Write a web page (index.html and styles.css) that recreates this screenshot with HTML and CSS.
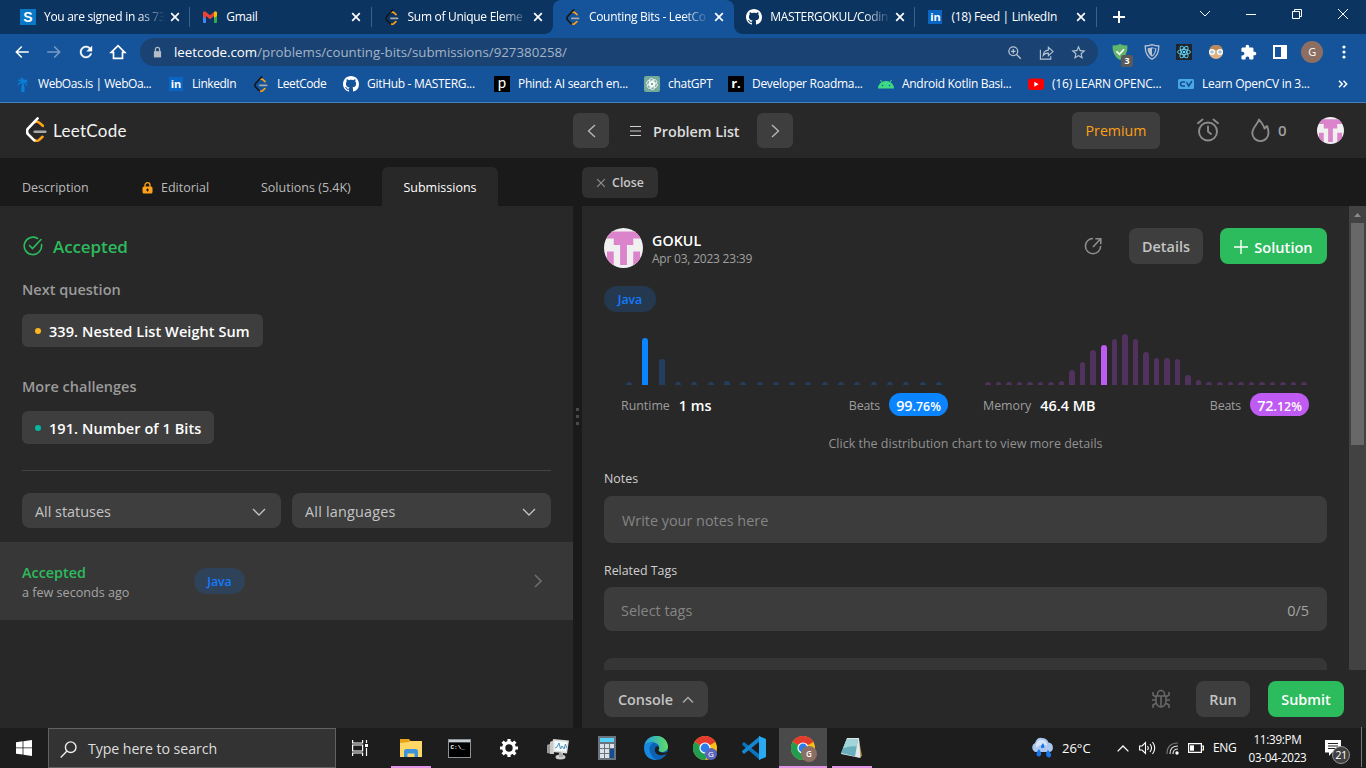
FILE: index.html
```html
<!DOCTYPE html>
<html lang="en">
<head>
<meta charset="utf-8">
<title>Counting Bits - LeetCode</title>
<link rel="stylesheet" href="styles.css">
</head>
<body>
<svg class="defs" aria-hidden="true">
  <symbol id="leet" viewBox="0 0 21 25"><g fill="none" stroke-width="2.6" stroke-linecap="round"><path d="M8.2 5.2l2.2-.6q1.400-.1 3 1.200l3.400 3M8.300 23.200q2.600 1.400 4.800-.2l3.400-3.200" stroke="#ffa116"/><path d="M8.700 14.700h10.600" stroke="#a9a9a9"/><path d="M11.600 1.400L2 11.600q-2 2.700 0 5.600l6.200 6.200" stroke="currentColor"/></g></symbol>
  <symbol id="github" viewBox="0 0 16 16"><path fill="#fff" d="M8 0C3.58 0 0 3.58 0 8c0 3.54 2.29 6.53 5.47 7.59.4.07.55-.17.55-.38 0-.19-.01-.82-.01-1.49-2.01.37-2.53-.49-2.69-.94-.09-.23-.48-.94-.82-1.13-.28-.15-.68-.52-.01-.53.63-.01 1.08.58 1.23.82.72 1.21 1.87.87 2.33.66.07-.52.28-.87.51-1.07-1.78-.2-3.64-.89-3.64-3.95 0-.87.31-1.59.82-2.15-.08-.2-.36-1.02.08-2.12 0 0 .67-.21 2.2.82.64-.18 1.32-.27 2-.27.68 0 1.36.09 2 .27 1.53-1.04 2.2-.82 2.2-.82.44 1.1.16 1.92.08 2.12.51.56.82 1.27.82 2.15 0 3.07-1.87 3.75-3.65 3.95.29.25.54.73.54 1.48 0 1.07-.01 1.93-.01 2.2 0 .21.15.46.55.38A8.013 8.013 0 0016 8c0-4.42-3.58-8-8-8z"/></symbol>
  <symbol id="close" viewBox="0 0 10 10"><path d="M1.2 1.2l7.6 7.6M8.8 1.2L1.2 8.8" stroke="currentColor" stroke-width="1.7" fill="none"/></symbol>
  <symbol id="close-thin" viewBox="0 0 10 10"><path d="M1.2 1.2l7.6 7.6M8.8 1.2L1.2 8.8" stroke="currentColor" stroke-width="1.2" fill="none"/></symbol>
  <symbol id="avatar" viewBox="0 0 40 40"><clipPath id="disc"><circle cx="20" cy="20" r="20"/></clipPath><g clip-path="url(#disc)"><path fill="#f0f0f0" d="M0 0h40v40H0z"/><path fill="#db83cb" d="M3 3.500h34v7h-7v6.500h-6.500V37h-7V17H10v-6.500H3zM3 23.500h7V37H3zM30 23.500h7V37h-7z"/></g></symbol>
  <symbol id="chrome" viewBox="0 0 24 24"><circle cx="12" cy="12" r="12" fill="#fbc116"/><path d="M12 12L1.600 6A12 12 0 0 1 22.400 6z" fill="#e33b2e"/><path d="M12 12L1.600 6A12 12 0 0 0 12 24L17.200 15z" fill="#219c50"/><circle cx="12" cy="12" r="5.600" fill="#fff"/><circle cx="12" cy="12" r="4.400" fill="#2b7de9"/></symbol>
  <symbol id="chevron-down" viewBox="0 0 14 8"><path d="M1 1l6 6 6-6" fill="none" stroke="currentColor" stroke-width="1.300"/></symbol>
</svg>

<header class="browser">
  <div class="tabstrip">
    <div class="tab first"><span class="fav sq-blue">S</span><span class="tab-title fade">You are signed in as 73</span><svg class="x"><use href="#close"/></svg></div>
    <div class="tab"><svg class="fav" viewBox="0 0 16 16"><path d="M1 3h3v11H2q-1 0-1-1z" fill="#4285f4"/><path d="M12 3h3v10q0 1-1 1h-2z" fill="#34a853"/><path d="M1 7V3.500Q2.500 1.500 4 3l4 3.200L12 3v4l-4 3.300L4 7v3z" fill="#ea4335"/><path d="M12 3q2-1.500 3 .5V7l-3 2z" fill="#fbbc04"/></svg><span class="tab-title">Gmail</span><svg class="x"><use href="#close"/></svg></div>
    <div class="tab"><svg class="fav leet-dark"><use href="#leet"/></svg><span class="tab-title fade">Sum of Unique Eleme</span><svg class="x"><use href="#close"/></svg></div>
    <div class="tab active"><svg class="fav leet-dark"><use href="#leet"/></svg><span class="tab-title fade">Counting Bits - LeetCo</span><svg class="x"><use href="#close"/></svg></div>
    <div class="tab"><svg class="fav"><use href="#github"/></svg><span class="tab-title fade">MASTERGOKUL/Codin</span><svg class="x"><use href="#close"/></svg></div>
    <div class="tab"><span class="fav linkedin">in</span><span class="tab-title">(18) Feed | LinkedIn</span><svg class="x"><use href="#close"/></svg></div>
    <svg class="newtab" viewBox="0 0 12 12"><path d="M6 0v12M0 6h12" stroke="#fff" stroke-width="2"/></svg>
    <div class="window-controls">
      <svg width="12" height="12" viewBox="0 0 12 12"><path d="M1 3l5 5 5-5" fill="none" stroke="#fff"/></svg>
      <svg width="12" height="12" viewBox="0 0 12 12"><path d="M1 6.500h10" stroke="#fff"/></svg>
      <svg width="12" height="12" viewBox="0 0 12 12"><path d="M1.500 3.500h7v7h-7zM3.500 3.500v-2h7v7h-2" fill="none" stroke="#fff"/></svg>
      <svg width="12" height="12" viewBox="0 0 12 12"><path d="M1 1l10 10M11 1L1 11" stroke="#fff"/></svg>
    </div>
  </div>

  <div class="toolbar">
    <svg class="nav" viewBox="0 0 24 24"><path fill="#fff" d="M21 11H6.800l5.600-5.600L11 4l-8 8 8 8 1.400-1.400L6.800 13H21z"/></svg>
    <svg class="nav dim" viewBox="0 0 24 24"><path fill="#fff" d="M3 11h14.200l-5.600-5.600L13 4l8 8-8 8-1.400-1.400 5.600-5.600H3z"/></svg>
    <svg class="nav" viewBox="0 0 24 24"><path fill="#fff" stroke="#fff" stroke-width=".5" d="M17.650 6.350C16.200 4.900 14.210 4 12 4c-4.420 0-7.990 3.580-7.990 8s3.570 8 7.990 8c3.730 0 6.840-2.550 7.730-6h-2.080c-.82 2.330-3.040 4-5.650 4-3.310 0-6-2.690-6-6s2.690-6 6-6c1.660 0 3.140.69 4.220 1.780L13 11h7V4l-2.350 2.350z"/></svg>
    <svg class="nav" viewBox="0 0 20 20"><path d="M2.500 10.500L10 3l7.500 7.500H15V17H5v-6.500z" fill="none" stroke="#fff" stroke-width="1.900"/></svg>
    <div class="omnibox">
      <svg class="lock" viewBox="0 0 10 12"><path d="M1 5h8v7H1z" fill="#b3bcc7"/><path d="M2.700 5V3.200a2.300 2.300 0 0 1 4.600 0V5" fill="none" stroke="#b3bcc7" stroke-width="1.400"/></svg>
      <span class="url"><b>leetcode.com</b>/problems/counting-bits/submissions/927380258/</span>
      <svg class="oi" viewBox="0 0 16 16"><g fill="none" stroke="#b6c3d2" stroke-width="1.400"><circle cx="6.700" cy="6.700" r="4.700"/><path d="M10.200 10.200l4.500 4.500M4.300 6.700h4.800M6.700 4.300v4.800"/></g></svg>
      <svg class="oi" viewBox="0 0 16 16"><g fill="none" stroke="#b6c3d2" stroke-width="1.200"><path d="M1.500 5v10h11v-3"/><path d="M4.500 11q.5-5 5.500-5.500V2.500L15 7l-5 4.500V8.700Q6.500 8.500 4.500 11z"/></g></svg>
      <svg class="oi star" viewBox="0 0 24 24"><path fill="#b6c3d2" d="M22 9.240l-7.190-.62L12 2 9.190 8.630 2 9.240l5.460 4.730L5.820 21 12 17.270 18.180 21l-1.630-7.030L22 9.240zM12 15.400l-3.760 2.270 1-4.280-3.320-2.880 4.380-.38L12 6.100l1.710 4.040 4.380.38-3.320 2.880 1 4.280L12 15.400z"/></svg>
    </div>
    <div class="ext"><svg width="16" height="16" viewBox="0 0 16 16"><path d="M8 0q3 1.500 7.500 1.500Q16 12 8 16 0 12 .5 1.500 5 1.500 8 0z" fill="#62b66b"/><path d="M4.500 7.300l3 3 4.500-5" fill="none" stroke="#fff" stroke-width="1.700"/></svg><span class="badge">3</span></div>
    <div class="ext"><svg width="16" height="16" viewBox="0 0 16 16"><path d="M8 .7q3 1.300 6.800 1.300Q15 11.500 8 15.300 1 11.500 1.200 2 5 2 8 .7z" fill="none" stroke="#b9c3d0" stroke-width="1.300"/><path d="M8 3.200q2 .8 4.400 1Q12.300 10 8 12.700 3.700 10 3.600 4.200 6 4 8 3.200z" fill="#b9c3d0"/><path d="M8 4.500h3.200Q11 9.500 8 11.500z" fill="#15539a"/></svg></div>
    <div class="ext"><svg width="16" height="16" viewBox="0 0 16 16"><path fill="#20232a" d="M0 0h16v16H0z"/><g fill="none" stroke="#61dafb" stroke-width=".9"><ellipse cx="8" cy="8" rx="6.500" ry="2.500"/><ellipse cx="8" cy="8" rx="6.500" ry="2.500" transform="rotate(60 8 8)"/><ellipse cx="8" cy="8" rx="6.500" ry="2.500" transform="rotate(120 8 8)"/></g><circle cx="8" cy="8" r="1.300" fill="#61dafb"/></svg></div>
    <div class="ext"><svg width="16" height="16" viewBox="0 0 16 16"><circle cx="8" cy="8" r="7" fill="#e0b283"/><path d="M1.500 6Q2 1 8 1t6.500 5z" fill="#b98a5c"/><circle cx="4" cy="8" r="2.400" fill="#a5c4d4" stroke="#fff" stroke-width="1.200"/><circle cx="12" cy="8" r="2.400" fill="#a5c4d4" stroke="#fff" stroke-width="1.200"/></svg></div>
    <div class="ext"><svg width="17" height="17" viewBox="0 0 24 24"><path fill="#fff" d="M20.500 11H19V7c0-1.100-.9-2-2-2h-4V3.500C13 2.120 11.880 1 10.500 1S8 2.120 8 3.500V5H4c-1.100 0-1.990.9-1.990 2v3.800H3.500c1.490 0 2.700 1.210 2.700 2.700s-1.210 2.700-2.700 2.700H2V20c0 1.100.9 2 2 2h3.800v-1.500c0-1.490 1.210-2.700 2.700-2.700 1.490 0 2.700 1.210 2.700 2.700V22H17c1.100 0 2-.9 2-2v-4h1.500c1.380 0 2.500-1.120 2.500-2.500S21.880 11 20.500 11z"/></svg></div>
    <div class="ext"><svg width="14" height="14" viewBox="0 0 14 14"><path fill="#fff" fill-rule="evenodd" d="M0 0h14v14H0zM2 2v10h6V2z"/></svg></div>
    <div class="ext"><span class="profile">G</span></div>
    <div class="ext"><svg width="4" height="14" viewBox="0 0 4 14"><g fill="#fff"><circle cx="2" cy="2" r="1.600"/><circle cx="2" cy="7" r="1.600"/><circle cx="2" cy="12" r="1.600"/></g></svg></div>
  </div>

  <nav class="bookmarks">
    <span class="bm tight"><svg class="fav" viewBox="0 0 16 16"><path d="M8 5Q5 1 3 6q2-2 4-.5Q4 6 3.500 10 6 7 8 6.500L7 16h3.500Q11 10 9 6.500q3 1 3 4Q14 8 11 6q2-.5 3 1Q13 2 9.500 4 10 1 6.500 2z" fill="#0a80d8"/></svg>WebOas.is | WebOa...</span>
    <span class="bm tight"><span class="fav linkedin">in</span>LinkedIn</span>
    <span class="bm tight"><svg class="fav leet-dark"><use href="#leet"/></svg>LeetCode</span>
    <span class="bm"><svg class="fav"><use href="#github"/></svg>GitHub - MASTERG...</span>
    <span class="bm"><span class="fav phind">p</span>Phind: AI search en...</span>
    <span class="bm"><svg class="fav" viewBox="0 0 16 16"><rect width="16" height="16" rx="2" fill="#74aa9c"/><g fill="none" stroke="#fff" stroke-width=".8"><rect x="5.300" y="2.500" width="4.500" height="7.500" rx="2.200"/><rect x="5.300" y="2.500" width="4.500" height="7.500" rx="2.200" transform="rotate(60 8 8)"/><rect x="5.300" y="2.500" width="4.500" height="7.500" rx="2.200" transform="rotate(120 8 8)"/><rect x="5.300" y="2.500" width="4.500" height="7.500" rx="2.200" transform="rotate(180 8 8)"/><rect x="5.300" y="2.500" width="4.500" height="7.500" rx="2.200" transform="rotate(240 8 8)"/><rect x="5.300" y="2.500" width="4.500" height="7.500" rx="2.200" transform="rotate(300 8 8)"/></g></svg>chatGPT</span>
    <span class="bm"><span class="fav roadmap">r.</span>Developer Roadma...</span>
    <span class="bm"><svg class="fav" viewBox="0 0 16 16"><path d="M0 12.500a8 7.500 0 0 1 16 0z" fill="#3ddc84"/><path d="M4 6.500L2.500 4M12 6.500L13.500 4" stroke="#3ddc84"/><circle cx="4.500" cy="9.500" r=".8" fill="#15539a"/><circle cx="11.500" cy="9.500" r=".8" fill="#15539a"/></svg>Android Kotlin Basi...</span>
    <span class="bm wide"><svg class="fav" viewBox="0 0 16 16"><rect y="2.500" width="16" height="11.500" rx="3" fill="red"/><path d="M6.300 5.800v5l4.300-2.500z" fill="#fff"/></svg>(16) LEARN OPENC...</span>
    <span class="bm"><svg class="fav" viewBox="0 0 16 16"><rect y="3" width="16" height="10" rx="1.500" fill="#4aa8e8"/><path d="M7 6H4.500Q2.500 6 2.500 8t2 2H7M8.500 6l2.200 4L14 5" fill="none" stroke="#114d91" stroke-width="1.500"/></svg>Learn OpenCV in 3...</span>
    <svg class="more" width="10" height="8" viewBox="0 0 10 8"><path d="M1 .8L4.200 4 1 7.200M5.500.8L8.700 4 5.500 7.200" fill="none" stroke="#fff" stroke-width="1.500"/></svg>
  </nav>
</header>

<div class="site-header">
  <div class="brand"><svg width="21" height="25"><use href="#leet"/></svg><span>LeetCode</span></div>
  <div class="problem-nav">
    <button class="square"><svg width="9" height="14" viewBox="0 0 9 14"><path d="M8 1L1.500 7 8 13" fill="none" stroke="currentColor" stroke-width="1.300"/></svg></button>
    <svg class="list" width="11" height="12" viewBox="0 0 11 12"><path d="M0 1.500h11M0 6h11M0 10.500h11" stroke="#d0d0d0" stroke-width="1.200"/></svg>
    <span class="list-title">Problem List</span>
    <button class="square"><svg width="9" height="14" viewBox="0 0 9 14"><path d="M1 1l6.500 6L1 13" fill="none" stroke="currentColor" stroke-width="1.300"/></svg></button>
  </div>
  <div class="account">
    <button class="premium">Premium</button>
    <svg class="alarm" width="22" height="24" viewBox="0 0 22 24"><g fill="none" stroke="#8c8c8c" stroke-width="1.900" stroke-linecap="round"><circle cx="11" cy="13.500" r="9"/><path d="M11 8.500v5l3 2.500M1 5.200L5.500 1.500M21 5.200L16.500 1.500"/></g></svg>
    <svg class="flame" width="19" height="24" viewBox="0 0 19 24"><path d="M8 1.500C7 6 1.300 9.500 1.300 15a8 8 0 0 0 16.200 0c0-3-.6-5-1.500-7l-2.500 2.500C12.500 7 10.500 4.500 8 1.500z" fill="none" stroke="#8c8c8c" stroke-width="1.900" stroke-linejoin="round"/></svg>
    <span class="streak">0</span>
    <svg class="me" width="27" height="27"><use href="#avatar"/></svg>
  </div>
</div>

<main class="workspace">
  <section class="left">
    <div class="tabs">
      <span class="t-desc">Description</span>
      <span class="t-edit"><svg width="11" height="12" viewBox="0 0 11 12"><rect x=".5" y="4.500" width="10" height="7" rx="1.500" fill="#ffa116"/><path d="M3 5V3.200a2.500 2.500 0 0 1 5 0V5" fill="none" stroke="#ffa116" stroke-width="1.300"/><path d="M5.500 6.500v3M4 8h3" stroke="#1a1a1a"/></svg>Editorial</span>
      <span class="t-sol">Solutions (5.4K)</span>
      <span class="t-sub">Submissions</span>
    </div>
    <div class="left-body">
      <div class="result">
        <h1><svg width="20" height="20" viewBox="0 0 20 20"><g fill="none" stroke="#2cbb5d" stroke-width="1.600" stroke-linecap="round"><path d="M18.500 8.500a8.700 8.700 0 1 1-4-6"/><path d="M6.500 9.500l3 3 8.500-9"/></g></svg>Accepted</h1>
        <h2>Next question</h2>
        <span class="question"><i class="dot medium"></i>339. Nested List Weight Sum</span>
        <h2 class="challenges">More challenges</h2>
        <span class="question"><i class="dot easy"></i>191. Number of 1 Bits</span>
        <div class="filters">
          <div class="select">All statuses<svg width="14" height="8"><use href="#chevron-down"/></svg></div>
          <div class="select languages">All languages<svg width="14" height="8"><use href="#chevron-down"/></svg></div>
        </div>
      </div>
      <div class="submission">
        <div class="status"><strong>Accepted</strong><span>a few seconds ago</span></div>
        <span class="lang">Java</span>
        <svg width="8" height="14" viewBox="0 0 8 14"><path d="M1 1l6 6-6 6" fill="none" stroke="#6b6b6b" stroke-width="1.700"/></svg>
      </div>
    </div>
  </section>

  <div class="gutter"><i></i><i></i><i></i></div>

  <section class="right">
    <div class="right-top"><button class="close-btn"><svg width="10" height="10"><use href="#close-thin"/></svg>Close</button></div>
    <div class="scroller">
      <div class="detail">
        <div class="who">
          <svg width="39" height="40" viewBox="0 0 40 40" preserveAspectRatio="none"><use href="#avatar"/></svg>
          <div class="name"><strong>GOKUL</strong><span>Apr 03, 2023 23:39</span></div>
          <svg class="share" width="18" height="18" viewBox="0 0 18 18"><g fill="none" stroke="#8c8c8c" stroke-width="1.600"><path d="M9 1.500a7.600 7.600 0 1 0 7.600 7.600M9 10l7-7.500M11.300 1.700h5.500v5.500"/></g></svg>
          <button class="details">Details</button>
          <button class="solution"><svg width="14" height="14" viewBox="0 0 14 14"><path d="M7 0v14M0 7h14" stroke="#fff" stroke-width="1.400"/></svg>Solution</button>
        </div>
        <span class="lang">Java</span>
        <div class="charts">
          <div class="chart runtime">
            <div class="bars"><i style="height:3px"></i><i class="on" style="height:47px"></i><i style="height:26px"></i><i style="height:3px"></i><i style="height:3px"></i><i style="height:3px"></i><i style="height:4px"></i><i style="height:3px"></i><i style="height:3px"></i><i style="height:3px"></i><i style="height:3px"></i><i style="height:3px"></i><i style="height:3px"></i><i style="height:3px"></i><i style="height:3px"></i><i style="height:3px"></i><i style="height:3px"></i><i style="height:3px"></i><i style="height:3px"></i><i style="height:3px"></i></div>
            <div class="legend"><span>Runtime</span><b>1 ms</b><span class="beats">Beats</span><em>99<small>.76%</small></em></div>
          </div>
          <div class="chart memory">
            <div class="bars"><i style="height:3px"></i><i style="height:3px"></i><i style="height:3px"></i><i style="height:3px"></i><i style="height:3px"></i><i style="height:3px"></i><i style="height:3px"></i><i style="height:4px"></i><i style="height:15px"></i><i style="height:23px"></i><i style="height:35px"></i><i class="on" style="height:40px"></i><i style="height:46px"></i><i style="height:51px"></i><i style="height:46px"></i><i style="height:33px"></i><i style="height:27px"></i><i style="height:27px"></i><i style="height:26px"></i><i style="height:10px"></i><i style="height:5px"></i><i style="height:3px"></i><i style="height:3px"></i><i style="height:3px"></i><i style="height:3px"></i><i style="height:3px"></i><i style="height:3px"></i><i style="height:3px"></i><i style="height:3px"></i><i style="height:3px"></i><i style="height:3px"></i></div>
            <div class="legend"><span>Memory</span><b>46.4 MB</b><span class="beats">Beats</span><em>72<small>.12%</small></em></div>
          </div>
        </div>
        <p class="hint">Click the distribution chart to view more details</p>
        <label>Notes</label>
        <div class="field notes">Write your notes here</div>
        <label class="tags-label">Related Tags</label>
        <div class="field tags"><span>Select tags</span><span class="count">0/5</span></div>
        <div class="field code"></div>
      </div>
      <div class="scrollbar">
        <svg width="7" height="4" viewBox="0 0 7 4"><path d="M0 4L3.500 0 7 4z" fill="#8a8a8a"/></svg>
        <div class="thumb"></div>
        <svg width="7" height="4" viewBox="0 0 7 4"><path d="M0 0l3.500 4L7 0z" fill="#fff"/></svg>
      </div>
    </div>
    <footer class="actions">
      <button class="console">Console<svg width="12" height="8" viewBox="0 0 12 8"><path d="M1 6.500l5-5 5 5" fill="none" stroke="#a8a8a8" stroke-width="1.500"/></svg></button>
      <svg class="bug" width="20" height="20" viewBox="0 0 20 20"><g fill="none" stroke="#666" stroke-width="1.600"><path d="M5 7h10v5a5 6 0 0 1-10 0zM10 7v11M6.500 7V5a3.500 3.500 0 0 1 7 0v2M1 11h4M15 11h4M5 8L2 6V3M15 8l3-2V3M5.500 14L2 16v3M14.500 14l3.500 2v3"/></g></svg>
      <button class="run">Run</button>
      <button class="submit">Submit</button>
    </footer>
  </section>
</main>

<footer class="taskbar">
  <div class="start"><svg width="16" height="16" viewBox="0 0 16 16"><path fill="#fff" d="M0 2.200L6.600 1.300v6.200H0zM7.400 1.200L16 0v7.500H7.400zM0 8.300h6.600v6.300L0 13.700zM7.400 8.300H16V16l-8.600-1.200z"/></svg></div>
  <div class="search"><svg width="17" height="17" viewBox="0 0 17 17"><g fill="none" stroke="#eee" stroke-width="1.400"><circle cx="10.700" cy="6.200" r="5.300"/><path d="M7 10L.7 16.400"/></g></svg>Type here to search</div>
  <div class="pin view"><svg width="17" height="16" viewBox="0 0 17 16"><g fill="none" stroke="#fff" stroke-width="1.200"><path d="M.6 0v3h10V0M.6 5h10v6H.6zM.6 16v-3h10v3M14.500 0v3M14.500 8v8"/></g><path fill="#fff" d="M13 4h3v3h-3z"/></svg></div>
  <div class="pin open"><svg width="22" height="18" viewBox="0 0 22 18"><path fill="#e8a317" d="M0 0h9l1.500 2H20v6H0z"/><path fill="#ffd766" d="M0 4l9-1 1-1h12v16H0z"/><path fill="#3d94dc" d="M4 18v-5.500Q4 10 6.500 10h9q2.500 0 2.500 2.500V18h-3.500v-3.500h-7V18z"/></svg></div>
  <div class="pin"><svg width="23" height="19" viewBox="0 0 23 19"><path fill="#8b9298" d="M0 0h23v19H0z"/><path fill="#c8d0d5" d="M1 1h21v2H1z"/><path d="M1 3.500h21V18H1z"/><text x="2.500" y="9.500" class="prompt">C:\_</text></svg></div>
  <div class="pin"><svg width="20" height="20" viewBox="0 0 20 20"><circle cx="10" cy="10" r="5.300" fill="none" stroke="#fff" stroke-width="3.200"/><path d="M10 1v4M10 15v4M1 10h4M15 10h4M3.600 3.600l2.900 2.900M13.500 13.500l2.900 2.900M3.600 16.400l2.900-2.900M13.500 6.500l2.900-2.900" stroke="#fff" stroke-width="3.200"/></svg></div>
  <div class="pin"><svg width="24" height="23" viewBox="0 0 24 23"><path fill="#999" d="M1 8l5-2v11l-5-1z"/><path fill="#c9c9c9" d="M4 5l4-2v14H4z"/><path fill="#dcdcdc" d="M7 2l16 1.500-2 13-14-1.500z"/><path fill="#f4fbff" d="M8.500 4L21.500 5 20 14.500 8.500 13.500z"/><path d="M9 11l2-1 2-4 1.500 6 1.500-3 2 3 1.500-5 1 4" fill="none" stroke="#4a94be"/><ellipse cx="14.500" cy="20" rx="5" ry="2.500" fill="#ccc"/><path fill="#aaa" d="M13 16h4v4h-4z"/></svg></div>
  <div class="pin"><svg width="18" height="24" viewBox="0 0 18 24"><path fill="#69747f" d="M0 0h18v24H0z"/><path fill="#55d2fa" d="M2 2h14v4H2z"/><path fill="#dbe1e7" d="M2 8h4v4H2zM7 8h4v4H7zM12 8h4v4h-4zM2 13h4v4H2zM7 13h4v4H7zM2 18h4v4H2zM7 18h4v4H7z"/><path fill="#124d91" d="M12 13h4v9h-4z"/></svg></div>
  <div class="pin"><svg width="24" height="24" viewBox="0 0 24 24"><defs><linearGradient id="edge" x2="1"><stop stop-color="#1f9fe8"/><stop offset="1" stop-color="#61dc62"/></linearGradient></defs><circle cx="12" cy="12" r="12" fill="#0c63b5"/><path fill="url(#edge)" d="M.3 10C2-3 22-4 24 10c.5 6-7 7.500-9 5-1-1.500 1-2 0-5-2.500-5-11-5-14.700 0z"/><path fill="#1789df" d="M.2 10Q4 6 9 7q-5 3-3 9 1 5 7 8Q-.5 24 .2 10z"/><path fill="#1d1d1d" d="M11.500 11q3.500-2 3.500 1.500-1.500 2 0 3 3 2 8.500.500l-.500 1.500q-4 2.500-8 1.500-6-2-3.500-8z"/></svg></div>
  <div class="pin"><svg width="24" height="24"><use href="#chrome"/></svg><span class="pin-badge blue">G</span></div>
  <div class="pin"><svg width="24" height="24" viewBox="0 0 24 24"><path fill="#0a76c1" d="M0 8l2-2 16 13V24L1 9.500z"/><path fill="#1487d4" d="M0 16l2 2L18 5V0L0 15z"/><path fill="#29a9f2" d="M17 0l7 3v18l-7 3z"/></svg></div>
  <div class="pin current"><svg width="24" height="24"><use href="#chrome"/></svg><span class="pin-badge brown">G</span></div>
  <div class="pin open last"><svg width="23" height="22" viewBox="0 0 23 22"><path fill="#b7893e" d="M19 3l3 16-4 2z"/><path fill="#dfe9eb" d="M7 1h12l1.500 20L1 17z"/><path fill="#68aebd" d="M6.500 2.500H18L15 19.500 1 16z"/><path fill="#a2d4dc" d="M6.500 2.500H18l-1.500 7q-6-1-13.500 2z"/></svg></div>
  <div class="tray">
    <svg class="weather" width="25" height="22" viewBox="0 0 25 22"><path fill="#a9c7f1" d="M5 15a5 5 0 0 1 0-9Q7 0 12 1q5 0 6.500 4.500A5 5 0 0 1 20 15z"/><path fill="#d8e4f8" d="M6 7q2-5 7-4 4 1 4 6Q12 5 6 11z"/><path fill="#1976ea" d="M9 12q3 4 2 6-2 3-4.500 0Q6 15 9 12zM18 13q4 4 3 6-2 3-4.500 0Q15 16 18 13zM13 6q2 3 1 4.500-1.500 1.500-3 0Q10.500 9 13 6z"/></svg>
    <span class="temp">26°C</span>
    <svg class="up" width="12" height="7" viewBox="0 0 12 7"><path d="M.6 6.400L6 1l5.400 5.400" fill="none" stroke="#fff" stroke-width="1.300"/></svg>
    <svg class="sound" width="17" height="14" viewBox="0 0 17 14"><g fill="none" stroke="#fff" stroke-width="1.100"><path d="M.6 5h2.500L6.500 1.500v11L3.100 9H.6zM8.500 5q1.500 2 0 4M11 3q3 4 0 8M13.500 1q4.500 6 0 12"/></g></svg>
    <svg class="wifi" width="13" height="13" viewBox="0 0 13 13"><g fill="none" stroke-width="1.200"><path d="M1 12Q1 1 12 1" stroke="#777"/><path d="M4 12Q4 4 12 4M7 12Q7 7 12 7" stroke="#ddd"/></g><circle cx="11" cy="11" r="1.700" fill="#fff"/></svg>
    <svg class="battery" width="16" height="10" viewBox="0 0 16 10"><path d="M.6.600h12.800v8.800H.6zM14 3h1.400v4H14" fill="none" stroke="#fff" stroke-width="1.200"/><path fill="#fff" d="M2 2.300h4v5.400H2z"/></svg>
    <span class="eng">ENG</span>
    <span class="clock">11:39:PM<br>03-04-2023</span>
    <div class="notice"><svg width="16" height="16" viewBox="0 0 16 16"><path fill="#fff" d="M0 0h16v12.500H7L4 16v-3.500H0z"/><path d="M3 3.500h10M3 6h10M3 8.500h7" stroke="#222"/></svg><span>21</span></div>
  </div>
</footer>
</body>
</html>
```
FILE: styles.css
```css
* { box-sizing: border-box; }
body { margin: 0; width: 1366px; height: 768px; overflow: hidden; background: #1a1a1a; color: #fff; font: 12.5px/18px "Open Sans", "Noto Sans", sans-serif; display: flex; flex-direction: column; }
.defs { position: absolute; width: 0; height: 0; }
svg { display: block; flex: none; }
button { border: 0; padding: 0; margin: 0; font: inherit; color: inherit; display: flex; align-items: center; justify-content: center; flex: none; }
span { white-space: nowrap; }

/* Browser frame */
.browser { height: 103px; background: #15539a; border-bottom: 1px solid #457ebd; flex: none; font-size: 12px; letter-spacing: -.3px; }
.tabstrip { height: 34px; background: #0c3461; display: flex; padding-left: 9px; }
.tab { width: 181.300px; height: 34px; padding-left: 12px; display: flex; align-items: center; position: relative; }
.tab.first { padding-left: 11px; }
.tab:not(.active)::after { content: ""; position: absolute; right: 0; top: 7px; width: 1px; height: 20px; background: #3a6090; }
.tab:nth-child(3)::after { display: none; }
.tab.active { background: #15539a; border-radius: 8px 8px 0 0; }
.tab.active::before, .tab.active::after { content: ""; position: absolute; bottom: 0; width: 8px; height: 8px; }
.tab.active::before { left: -8px; background: radial-gradient(circle at 0 0, transparent 7.500px, #15539a 8px); }
.tab.active::after { right: -8px; background: radial-gradient(circle at 100% 0, transparent 7.500px, #15539a 8px); }
.fav { width: 16px; height: 16px; margin-right: 8px; flex: none; font-weight: 700; text-align: center; line-height: 15px; letter-spacing: 0; }
.leet-dark { color: #101820; }
.sq-blue { background: #0a78c8; font: 700 14px/16px "Liberation Sans", sans-serif; }
.linkedin { background: #0a66c2; width: 14px; height: 14px; margin: 0 9px 0 1px; font-size: 11px; line-height: 13px; }
.phind { background: #000; font: 15px/13px Lato, sans-serif; }
.roadmap { background: #000; font-size: 13px; }
.tab-title { width: 121px; margin-right: 6px; }
.first .tab-title { margin-right: 7px; }
.fade { -webkit-mask-image: linear-gradient(90deg, #000 78%, transparent); mask-image: linear-gradient(90deg, #000 78%, transparent); }
.x { width: 10px; height: 10px; margin-left: -2px; }
.newtab { width: 12px; height: 12px; margin: 11px 0 0 16px; }
.window-controls { margin-left: auto; display: grid; grid-template-columns: repeat(4, 46px); justify-items: center; padding-top: 8px; width: 184px; }
.toolbar { height: 36px; padding-left: 6px; display: grid; grid-template-columns: repeat(4, 32px) 970px repeat(8, 32px); align-items: center; justify-items: center; }
.nav { width: 18px; height: 18px; }
.dim { opacity: .42; }
.omnibox { width: 958px; height: 28px; border-radius: 14px; background: #1a4373; display: flex; align-items: center; padding: 0 11px 0 13px; }
.lock { width: 9px; height: 12px; }
.url { margin-left: 12px; font-size: 13.300px; letter-spacing: 0; color: #a4b4c7; flex: 1; }
.url b { color: #fff; font-weight: 400; }
.oi { width: 15px; height: 15px; margin-left: 17px; }
.oi.star { width: 17px; height: 17px; margin: 0 0 0 16px; }
.ext { width: 32px; height: 32px; display: grid; place-items: center; position: relative; }
.badge { position: absolute; right: 3px; bottom: 1px; width: 12px; height: 12px; border-radius: 2px; background: #5a5a5a; font: 700 9px/12px "Open Sans", sans-serif; text-align: center; }
.profile { width: 22px; height: 22px; border-radius: 50%; background: #8d6e63; text-align: center; line-height: 22px; font-size: 11px; }
.bookmarks { height: 28px; padding-left: 14px; display: grid; grid-template-columns: 154px 85px 90px 151px 150px 84px 150px 150px 150px 160px 12px; align-items: center; font-size: 12px; }
.bm { display: flex; align-items: center; }
.bm.tight { letter-spacing: -.45px; }
.bm.wide { letter-spacing: -.2px; }

/* Site header */
.site-header { height: 55px; background: #282828; display: flex; flex: none; }
.brand { width: 573px; padding: 14px 0 0 26px; display: flex; }
.brand span { font: 17px/28px Lato, sans-serif; letter-spacing: .3px; margin-left: 6px; color: #f3f3f3; }
.problem-nav { display: flex; padding-top: 10px; width: 499px; }
.square { width: 36px; height: 35px; border-radius: 6px; background: #3e3e3e; color: #bbb; }
.list { margin: 12px 12px 0 21px; }
.list-title { width: 104px; line-height: 37px; font-size: 14.400px; font-weight: 600; color: #dcdcdc; letter-spacing: -.05px; }
.account { display: flex; padding-top: 9px; }
.premium { width: 88px; height: 37px; padding-top: 1px; border-radius: 6px; background: #3e3e3e; color: #ffa116; font-size: 14.200px; }
.alarm { margin: 6px 32px 0 37px; }
.flame { margin-top: 6px; }
.streak { font-size: 15px; font-weight: 600; color: #a0a0a0; line-height: 37px; margin-left: 8px; width: 39px; }
.me { margin-top: 5px; }

/* Workspace */
.workspace { height: 570px; display: grid; grid-template-columns: 573px 9px 784px; flex: none; }
.tabs { height: 48px; display: flex; padding: 9px 0 0 22px; color: #bababa; line-height: 41px; font-size: 12.500px; }
.t-desc { width: 120px; }
.t-edit { width: 119px; display: flex; align-items: center; gap: 8px; height: 41px; line-height: 41px; }
.t-sol { width: 121px; }
.t-sub { width: 116px; text-align: center; background: #282828; color: #fff; border-radius: 6px 6px 0 0; }
.left-body { height: 522px; background: #282828; }
.result { padding: 28px 22px 0; height: 336px; }
h1 { margin: 0; display: flex; align-items: center; gap: 10px; height: 26px; font-size: 17px; font-weight: 600; color: #2cbb5d; letter-spacing: -.1px; padding-left: 1px; }
h1 svg { margin-top: -2px; }
h2 { margin: 18px 0 12px; height: 24px; font-size: 14.500px; line-height: 24px; font-weight: 600; color: #9b9b9b; }
.question { display: inline-flex; align-items: center; height: 33px; padding: 2px 13px 0; background: #3e3e3e; border-radius: 6px; font-size: 14.500px; letter-spacing: .08px; font-weight: 600; vertical-align: top; }
.dot { width: 6px; height: 6px; border-radius: 50%; margin: -2px 8px 0 0; }
.medium { background: #ffb71b; }
.easy { background: #00b8a3; }
.challenges { margin: 28px 0 12px; }
.filters { margin-top: 26px; border-top: 1px solid #434343; padding-top: 22px; display: grid; grid-template-columns: 259px 259px; gap: 11px; }
.select { height: 35px; border-radius: 8px; background: #3e3e3e; padding: 2px 15px 0 13px; display: flex; align-items: center; justify-content: space-between; font-size: 14.400px; color: #c4c4c4; }
.languages { letter-spacing: .2px; }
.submission { height: 78px; background: #373737; display: flex; align-items: center; padding: 0 31px 0 22px; }
.submission > svg { margin-left: auto; }
.status { width: 172px; display: flex; flex-direction: column; color: #a5a5a5; font-size: 12.600px; padding-top: 1px; }
.status strong { font-size: 14.400px; line-height: 22px; font-weight: 600; color: #2cbb5d; }
.lang { display: block; width: 52px; height: 26px; border-radius: 13px; background: #24394f; color: #147aff; font-size: 12.300px; font-weight: 600; text-align: center; line-height: 27px; }
.submission .lang { background: #2e4359; width: 51px; }
.gutter { display: flex; flex-direction: column; align-items: center; gap: 4px; padding-top: 250px; }
.gutter i { width: 3px; height: 3px; background: #4a4a4a; }
.right-top { height: 48px; padding-top: 9px; }
.close-btn { width: 76px; height: 31px; border-radius: 6px; background: #303030; color: #c8c8c8; font-size: 12.300px; font-weight: 600; gap: 6px; }
.close-btn svg { color: #8f8f8f; }
.scroller { height: 464px; display: grid; grid-template-columns: 767px 17px; background: #282828; overflow: hidden; }
.detail { padding: 22px 22px 0; }
.who { display: flex; height: 40px; margin-bottom: 18px; }
.name { width: 442px; margin-left: 9px; display: flex; flex-direction: column; font-size: 12px; letter-spacing: -.22px; color: #a0a0a0; padding-top: 3px; }
.name strong { font-size: 14.200px; letter-spacing: .1px; font-weight: 600; line-height: 19px; color: #fff; }
.share { margin: 9px 0 0 -10px; width: 18px; }
.details { margin-left: 27px; width: 74px; height: 36px; padding-top: 1px; border-radius: 8px; background: #3e3e3e; color: #c4c4c4; font-size: 14.400px; font-weight: 600; }
.solution { margin-left: 17px; width: 107px; height: 36px; padding-top: 1px; border-radius: 8px; background: #2cbb5d; font-size: 14.600px; font-weight: 600; gap: 6px; }
.charts { display: grid; grid-template-columns: 361px 362px; margin-top: 21px; }
.bars { height: 52px; display: flex; align-items: flex-end; justify-content: space-between; }
.bars i { border-radius: 3px 3px 0 0; }
.runtime .bars { margin: 0 23px 0 22px; }
.runtime .bars i { width: 6px; background: #233f5f; }
.memory .bars { margin: 0 20px; }
.memory .bars i { width: 5.500px; background: #51325e; }
.runtime .bars .on { background: #0a84ff; }
.memory .bars .on { background: #bf5af2; }
.legend { display: flex; align-items: center; height: 23px; margin: 8px 17px 0; color: #9d9d9d; font-size: 12.400px; line-height: 20px; }
.legend > span, .legend > b { padding-top: 2px; }
.memory .legend { margin: 8px 18px 0; }
.legend b { margin-left: 9px; font-size: 14.400px; font-weight: 600; color: #fff; }
.legend .beats { margin-left: auto; letter-spacing: -.2px; }
.legend em { width: 59px; height: 23px; border-radius: 12px; margin-left: 9px; text-align: center; color: #fff; font: 600 14.400px/25px "Open Sans", sans-serif; background: #0a84ff; }
.memory .legend em { background: #bf5af2; }
.legend small { font-size: 12.400px; }
.hint { margin: 19px 0 17px; text-align: center; color: #929292; font-size: 12.500px; }
.detail label { display: block; font-size: 12.400px; height: 18px; color: #d0d0d0; }
.field { background: #3c3c3c; border-radius: 8px; color: #858585; font-size: 14.400px; display: flex; align-items: center; }
.notes { height: 47px; margin-top: 8px; padding: 2px 18px 0; }
.detail .tags-label { margin-top: 18px; line-height: 20px; }
.tags { height: 44px; margin-top: 8px; padding: 4px 18px 0 17px; justify-content: space-between; }
.count { color: #a5a5a5; }
.code { height: 40px; margin-top: 27px; background: #363636; }
.scrollbar { background: #424242; display: flex; flex-direction: column; align-items: center; padding: 7px 0; }
.scrollbar svg:last-child { margin-top: auto; }
.thumb { width: 13px; height: 222px; background: #686868; margin-top: 6px; }
.actions { height: 58px; background: #282828; display: flex; padding: 11px 22px 0; font-size: 14.400px; font-weight: 600; }
.actions button { height: 36px; padding-top: 1px; border-radius: 8px; background: #3e3e3e; color: #c4c4c4; }
.actions .console { width: 104px; gap: 9px; }
.bug { margin: 8px 25px 0 auto; }
.actions .run { width: 54px; }
.actions .submit { width: 76px; margin-left: 18px; background: #2cbb5d; color: #fff; }

/* Taskbar */
.taskbar { height: 40px; background: #1d1d1d; display: flex; flex: none; }
.start { width: 48px; display: grid; place-items: center; }
.search { width: 288px; border: 1px solid #626262; background: #333; display: flex; align-items: center; gap: 11px; padding: 2px 0 0 11px; font-size: 14.200px; letter-spacing: -.08px; color: #dedede; }
.pin { width: 49px; padding-right: 2px; display: grid; place-items: center; position: relative; }
.pin.view { width: 48px; margin-right: 3px; padding: 0; }
.pin.open::after { content: ""; position: absolute; bottom: 0; left: 4px; width: 40px; height: 2px; background: #e394e8; }
.pin.current { width: 48px; background: #4a4a4a; border-bottom: 2px solid #e394e8; padding: 2px 0 0; }
.pin.last { margin-left: 1px; }
.prompt { font: 700 6px "Liberation Mono", monospace; fill: #fff; }
.pin-badge { position: absolute; border-radius: 50%; text-align: center; font-size: 8px; }
.blue { width: 12px; height: 12px; right: 13px; top: 20px; line-height: 12px; background: #5b65bd; }
.brown { width: 16px; height: 16px; right: 10px; top: 18px; line-height: 16px; background: #8d6e63; font-weight: 600; }
.tray { margin-left: auto; width: 336px; display: flex; align-items: center; border-right: 0; font-size: 12px; }
.temp { margin-left: 7px; width: 55px; font-size: 13px; }
.up { margin-right: 10px; }
.wifi { margin-left: 10px; }
.battery { margin-left: 9px; }
.eng { margin-left: 9px; width: 32px; letter-spacing: -.4px; }
.clock { width: 66px; text-align: center; font-size: 11.700px; letter-spacing: -.3px; line-height: 18px; padding-right: 1px; }
.notice { position: relative; margin: -2px 0 0 14px; width: 37px; height: 40px; padding-top: 13px; border-right: 1px solid #777; }
.notice span { position: absolute; left: 7px; top: 19px; width: 18px; height: 18px; border-radius: 50%; background: #404040; border: 1px solid #999; font-size: 11px; line-height: 15px; text-align: center; letter-spacing: -.5px; }
```
